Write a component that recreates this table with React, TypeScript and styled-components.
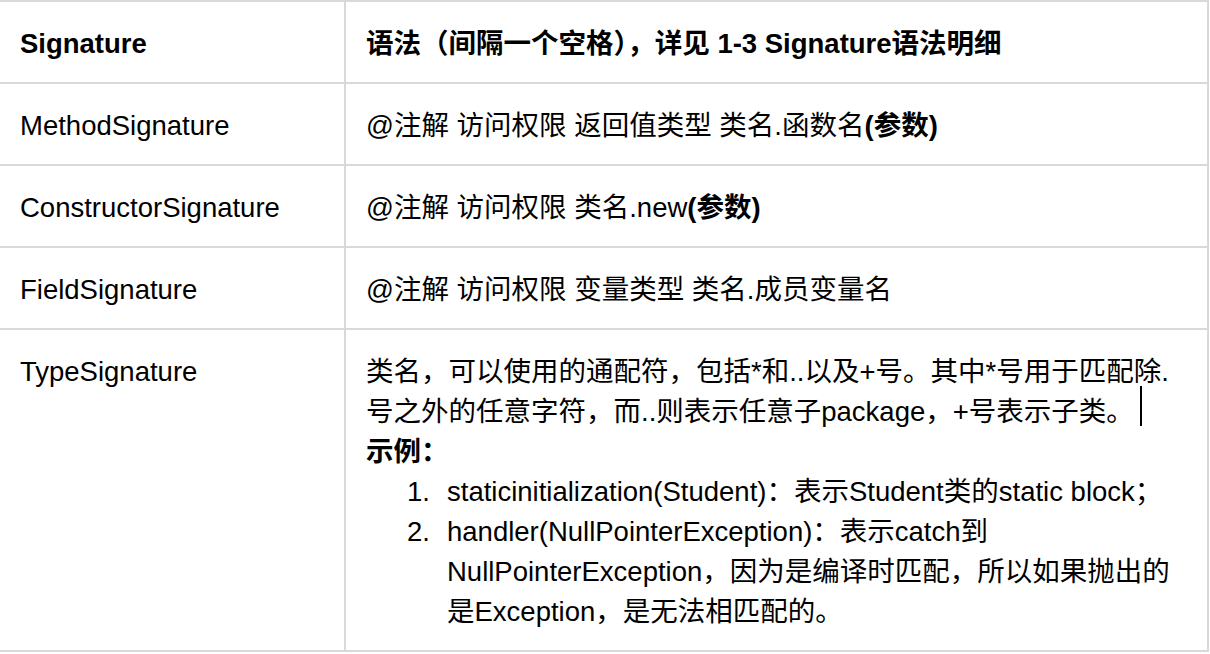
import React from "react";
import styled, { createGlobalStyle } from "styled-components";

const GlobalStyle = createGlobalStyle`
  html, body {
    margin: 0;
    padding: 0;
    background: #ffffff;
  }
  body {
    font-family: "Liberation Sans", "Noto Sans CJK SC", sans-serif;
    color: #000;
    overflow: hidden;
  }
`;

const Table = styled.div`
  display: grid;
  grid-template-columns: 346px 1fr;
  width: 1211px;
  margin-left: -2px;
  box-sizing: border-box;
  border-top: 2px solid #d9d9d9;
  border-left: 2px solid #d9d9d9;
  font-family: "Liberation Sans", "Noto Sans CJK SC", sans-serif;
  font-size: 27.5px;
  line-height: 40px;
  color: #000;
`;

const Cell = styled.div<{ $head?: boolean }>`
  box-sizing: border-box;
  padding: 22px 20px 18px 20px;
  border-right: 2px solid #d9d9d9;
  border-bottom: 2px solid #d9d9d9;
  font-weight: ${(p) => (p.$head ? 700 : 400)};
  white-space: nowrap;
`;

const Strong = styled.b`
  font-weight: 700;
`;

const Para = styled.div``;

const Caret = styled.span`
  display: inline-block;
  width: 2px;
  height: 40px;
  margin-left: 6px;
  background: #000;
  vertical-align: top;
  transform: translateY(-6px);
`;

const List = styled.ol`
  margin: 0;
  padding: 0;
  list-style: none;
`;

const Item = styled.li`
  display: grid;
  grid-template-columns: 81px 1fr;
`;

const Marker = styled.span`
  text-align: right;
  padding-right: 17px;
`;

const rows: { name: string; syntax: React.ReactNode }[] = [
  {
    name: "MethodSignature",
    syntax: (
      <>
        @注解 访问权限 返回值类型 类名.函数名<Strong>(参数)</Strong>
      </>
    ),
  },
  {
    name: "ConstructorSignature",
    syntax: (
      <>
        @注解 访问权限 类名.new<Strong>(参数)</Strong>
      </>
    ),
  },
  {
    name: "FieldSignature",
    syntax: <>@注解 访问权限 变量类型 类名.成员变量名</>,
  },
];

export default function App() {
  return (
    <>
      <GlobalStyle />
      <Table>
        <Cell $head>Signature</Cell>
        <Cell $head>语法（间隔一个空格），详见 1-3 Signature语法明细</Cell>
        {rows.map((r) => (
          <React.Fragment key={r.name}>
            <Cell>{r.name}</Cell>
            <Cell>{r.syntax}</Cell>
          </React.Fragment>
        ))}
        <Cell>TypeSignature</Cell>
        <Cell>
          <Para>类名，可以使用的通配符，包括*和..以及+号。其中*号用于匹配除.</Para>
          <Para>
            号之外的任意字符，而..则表示任意子package，+号表示子类。
            <Caret />
          </Para>
          <Para>
            <Strong>示例：</Strong>
          </Para>
          <List>
            <Item>
              <Marker>1.</Marker>
              <span>staticinitialization(Student)：表示Student类的static block；</span>
            </Item>
            <Item>
              <Marker>2.</Marker>
              <span>
                handler(NullPointerException)：表示catch到
                <br />
                NullPointerException，因为是编译时匹配，所以如果抛出的
                <br />
                是Exception，是无法相匹配的。
              </span>
            </Item>
          </List>
        </Cell>
      </Table>
    </>
  );
}
